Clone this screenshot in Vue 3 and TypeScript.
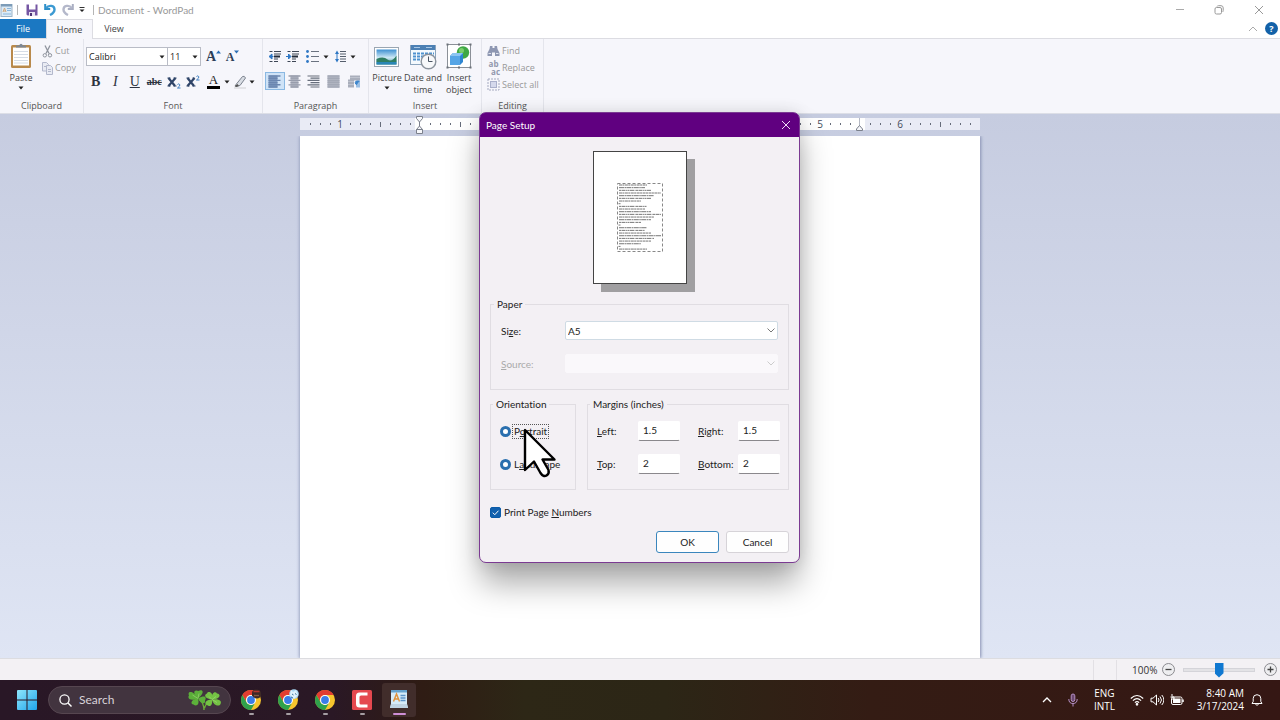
<script setup lang="ts">
import { ref } from 'vue'

const fontName = ref('Calibri')
const fontSize = ref('11')
const paperSize = ref('A5')
const orientation = ref('portrait')
const printNumbers = ref(true)
const zoom = ref(50)
const margins = ref({ left: '1.5', right: '1.5', top: '2', bottom: '2' })

interface Mark { kind: 'num' | 'half' | 'dot' | 'none'; text: string; inside: boolean }

// Ruler: eight divisions to the inch, zero at the left margin (division 12)
const marks: Mark[] = Array.from({ length: 67 }, (_, n) => {
  const i = n + 1
  const inch = Math.abs(i - 12) / 8
  const inside = i >= 12 && i <= 56
  if (i === 12 || i === 56) return { kind: 'none', text: '', inside }
  if (Number.isInteger(inch)) return { kind: 'num', text: String(inch), inside }
  return { kind: i % 4 === 0 ? 'half' : 'dot', text: '', inside }
})

// Widths of the sample paragraph's lines in the page preview
const lineWidths = [28, 26, 32, 42, 35, 32, 22, 2]
const previewLines = Array.from({ length: 25 }, (_, i) => ({
  y: 2 + i * 2.67,
  w: lineWidths[i % 8],
  dash: i % 3 === 0 ? '3 .4 2 .5' : i % 3 === 1 ? '5 .5 1.5 .4' : '2 .5 4 .6 1 .4',
}))
</script>

<template>
  <div class="desktop">
    <header class="titlebar">
      <svg class="app-icon" width="13" height="14" viewBox="0 0 13 14">
        <rect x="1" y="1.5" width="11" height="12" fill="#dcebf7" stroke="#9db4c8" />
        <rect x="1" y="1" width="11" height="2.5" fill="#7d9cb8" />
        <path d="M3 9l1.5-4L6 9M3.5 8h2" stroke="#d3a87c" fill="none" />
        <path d="M7 5.5h4M7 7.5h4M3 11h8" stroke="#8bb6db" />
      </svg>
      <i class="vbar"></i>
      <button class="ico" aria-label="Save">
        <svg width="12" height="12" viewBox="0 0 12 12">
          <path d="M.5 .5h11v11h-10l-1-1z" fill="#7556a3" />
          <rect x="3" y="0" width="6.5" height="5.5" fill="#fff" />
          <rect x="3" y="8" width="6" height="4" fill="#e9e4f2" />
          <rect x="4" y="9" width="2" height="3" fill="#4c3475" />
        </svg>
      </button>
      <button class="ico" aria-label="Undo">
        <svg width="12" height="13" viewBox="0 0 12 13">
          <path d="M1.200 1v5h5" fill="none" stroke="#2d8fc9" stroke-width="2" />
          <path d="M2 5c3-3.500 8.500-2.500 8.500 1.500 0 2.500-1.500 4-4.500 5.500" fill="none" stroke="#3c9ad2" stroke-width="2.400" />
        </svg>
      </button>
      <button class="ico" aria-label="Redo">
        <svg width="12" height="13" viewBox="0 0 12 13">
          <path d="M10.800 1v5h-5" fill="none" stroke="#a9aec2" stroke-width="2" />
          <path d="M10 5C7 1.500 1.500 2.500 1.500 6.500 1.500 9 3 10.500 6 12" fill="none" stroke="#b4b8ca" stroke-width="2.400" />
        </svg>
      </button>
      <button class="ico small" aria-label="Customize Quick Access Toolbar">
        <svg width="6" height="6" viewBox="0 0 6 6"><path d="M.5 .5h5" stroke="#333" /><path d="M.5 2.500h5L3 5z" fill="#222" /></svg>
      </button>
      <i class="vbar last"></i>
      <span class="title">Document - WordPad</span>
      <div class="caption">
        <button aria-label="Minimize"><svg width="10" height="10" viewBox="0 0 10 10"><path d="M1 4.500h8" stroke="#aaa" /></svg></button>
        <button aria-label="Restore"><svg width="10" height="10" viewBox="0 0 10 10" fill="none" stroke="#999"><rect x="1" y="2.500" width="6.500" height="6.500" rx="1.500" /><path d="M3 1.500q.3-.8 1.500-.8h2.500q2.200 0 2.200 2.200v2.600q0 1-.8 1.500" /></svg></button>
        <button aria-label="Close"><svg width="10" height="10" viewBox="0 0 10 10"><path d="M1 1l8 8M9 1l-8 8" stroke="#999" /></svg></button>
      </div>
    </header>

    <nav class="tabs">
      <button class="tab file">File</button>
      <button class="tab home">Home</button>
      <button class="tab">View</button>
      <div class="tab-tools">
        <button class="ico" aria-label="Minimize the Ribbon"><svg width="10" height="6" viewBox="0 0 10 6"><path d="M1 5l4-4 4 4" fill="none" stroke="#aaa" /></svg></button>
        <button class="help" aria-label="Help">?</button>
      </div>
    </nav>

    <section class="ribbon">
      <div class="group g-clip">
        <div class="body clip">
          <button class="big">
            <svg width="24" height="27" viewBox="0 0 24 27">
              <rect x="2" y="2" width="20" height="23" rx="1.500" fill="#b98a4c" />
              <rect x="4" y="4.500" width="16" height="18" fill="#fff" />
              <path d="M5 8.500h14M5 11.500h14M5 14.500h14M5 17.500h14M5 20h14" stroke="#d5dce6" />
              <path d="M7 4.500V2.500h3q2-3.500 4 0h3v2z" fill="#7d8794" />
            </svg>
            <span>Paste</span>
            <svg width="6" height="4" viewBox="0 0 6 4"><path d="M.5 .5h5L3 3.500z" fill="#222" /></svg>
          </button>
          <div class="side">
            <button class="row-btn">
              <svg width="11" height="13" viewBox="0 0 11 13" fill="none" stroke="#8f949e">
                <path d="M3 .5l4 8M8 .5l-4 8" stroke-width="1.300" /><circle cx="2.800" cy="10.300" r="1.700" /><circle cx="8" cy="10.300" r="1.700" />
              </svg>Cut</button>
            <button class="row-btn">
              <svg width="11" height="13" viewBox="0 0 11 13" fill="#e9ebf3" stroke="#b3b8cc">
                <path d="M.5 .5h4l2 2v6.500h-6z" /><path d="M4.500 3.500h4l2 2v7h-6z" /><path d="M6 7.500h3M6 9.500h3M2 4.500h2" />
              </svg>Copy</button>
          </div>
        </div>
        <div class="label">Clipboard</div>
      </div>

      <div class="group g-font">
        <div class="body rows">
          <div class="line">
            <span class="combo name">
              <select v-model="fontName" aria-label="Font family"><option>Calibri</option></select>
              <svg width="6" height="4" viewBox="0 0 6 4"><path d="M.5 .5h5L3 3.500z" fill="#222" /></svg>
            </span>
            <span class="combo size">
              <select v-model="fontSize" aria-label="Font size"><option>11</option></select>
              <svg width="6" height="4" viewBox="0 0 6 4"><path d="M.5 .5h5L3 3.500z" fill="#222" /></svg>
            </span>
            <button class="ico grow" aria-label="Grow font"><b>A</b><svg width="5" height="4" viewBox="0 0 5 4"><path d="M0 3.500h5L2.500 .5z" fill="#2c6fb5" /></svg></button>
            <button class="ico shrink" aria-label="Shrink font"><b>A</b><svg width="5" height="4" viewBox="0 0 5 4"><path d="M0 .5h5L2.500 3.500z" fill="#2c6fb5" /></svg></button>
          </div>
          <div class="line">
            <div class="six">
              <button class="ico serif" aria-label="Bold"><b>B</b></button>
              <button class="ico serif" aria-label="Italic"><i>I</i></button>
              <button class="ico serif" aria-label="Underline"><u>U</u></button>
              <button class="ico strike" aria-label="Strikethrough"><s>abc</s></button>
              <button class="ico" aria-label="Subscript">
                <svg width="14" height="14" viewBox="0 0 14 14"><path d="M1.500 3l6.500 8M8.500 3l-7 8" stroke="#2f4468" stroke-width="2.200" /><path d="M.5 3h3M6.500 3h3M.5 11h3M6.500 11h3" stroke="#2f4468" /><path d="M10.500 9.500q1.200-1.200 2.200 0t-2.200 3.500h3" fill="none" stroke="#3b7cc0" /></svg>
              </button>
              <button class="ico" aria-label="Superscript">
                <svg width="14" height="14" viewBox="0 0 14 14"><path d="M1.500 3l6.500 8M8.500 3l-7 8" stroke="#2f4468" stroke-width="2.200" /><path d="M.5 3h3M6.500 3h2M.5 11h3M6.500 11h3" stroke="#2f4468" /><path d="M10.500 1.500q1.200-1.200 2.200 0t-2.200 3.500h3" fill="none" stroke="#3b7cc0" /></svg>
              </button>
            </div>
            <button class="ico color" aria-label="Text color"><span>A</span><svg width="6" height="4" viewBox="0 0 6 4"><path d="M.5 .5h5L3 3.500z" fill="#222" /></svg></button>
            <button class="ico pen" aria-label="Text highlight color">
              <svg width="14" height="14" viewBox="0 0 14 14"><path d="M3 9.500L9.500 1.500q2-1 3 1.500L7 10.500l-4 1z" fill="#d9dde4" stroke="#7b828e" /><path d="M1 13h12" stroke="#dcdce0" stroke-width="1.500" /><path d="M1.500 11l3-2 1.500 2-3 1z" fill="#555" /></svg>
              <svg width="6" height="4" viewBox="0 0 6 4"><path d="M.5 .5h5L3 3.500z" fill="#222" /></svg>
            </button>
          </div>
        </div>
        <div class="label">Font</div>
      </div>

      <div class="group g-para">
        <div class="body rows">
          <div class="line indent">
            <button class="ico" aria-label="Decrease indent"><svg width="14" height="13" viewBox="0 0 14 13"><path d="M1.500 1.500h3M6 1.500h7M1.500 11.500h3M6 11.500h4M6 9h4M6 4h7" stroke="#3d4655" /><path d="M6 6.500h6" stroke="#222a38" stroke-width="2" /><path d="M5.500 6.500h-3M4 4L1 6.500 4 9z" stroke="#2e77c4" fill="#2e77c4" /></svg></button>
            <button class="ico" aria-label="Increase indent"><svg width="14" height="13" viewBox="0 0 14 13"><path d="M1.500 1.500h3M6 1.500h7M1.500 11.500h3M6 11.500h4M6 9h4M6 4h7" stroke="#3d4655" /><path d="M6 6.500h6" stroke="#222a38" stroke-width="2" /><path d="M0 6.500h3M2.500 4L5 6.500 2.500 9z" stroke="#2e77c4" fill="#2e77c4" /></svg></button>
            <button class="ico wide" aria-label="Start a list"><svg width="13" height="13" viewBox="0 0 13 13"><path d="M5 1.500h8M5 6.500h8M5 11.500h8" stroke="#6a7280" /><circle cx="1.500" cy="1.500" r="1.400" fill="#2e77c4" /><circle cx="1.500" cy="6.500" r="1.400" fill="#2e77c4" /><circle cx="1.500" cy="11.500" r="1.400" fill="#2e77c4" /></svg>
              <svg width="6" height="4" viewBox="0 0 6 4"><path d="M.5 .5h5L3 3.500z" fill="#222" /></svg></button>
            <button class="ico wide" aria-label="Line spacing"><svg width="11" height="13" viewBox="0 0 11 13"><path d="M5 1.500h6M5 4h6M5 6.500h6M5 9h6M5 11.500h6" stroke="#555e6c" /><path d="M2 3v7" stroke="#2e77c4" /><path d="M0 4l2-3.500L4 4zM0 9l2 3.500L4 9z" fill="#2e77c4" /></svg>
              <svg width="6" height="4" viewBox="0 0 6 4"><path d="M.5 .5h5L3 3.500z" fill="#222" /></svg></button>
          </div>
          <div class="five">
            <button class="ico on" aria-label="Align left"><svg width="13" height="13" viewBox="0 0 13 13"><path d="M.5 .5h9v12h-9z" fill="#7f9ac0" /><path d="M.5 1h12M.5 3.200h9M.5 5.400h12M.5 7.600h9M.5 9.800h12M.5 12h9" stroke="#6b86b0" stroke-width="1.400" /></svg></button>
            <button class="ico" aria-label="Center"><svg width="13" height="13" viewBox="0 0 13 13"><path d="M2.500 .5h8v12h-8z" fill="#b4b8c4" /><path d="M.5 1h12M2.500 3.200h8M.5 5.400h12M2.500 7.600h8M.5 9.800h12M2.500 12h8" stroke="#979cab" stroke-width="1.300" /></svg></button>
            <button class="ico" aria-label="Align right"><svg width="13" height="13" viewBox="0 0 13 13"><path d="M.5 1h12M3.500 3.200h9M.5 5.400h12M3.500 7.600h9M.5 9.800h12M3.500 12h9" stroke="#666d7b" stroke-width="1.200" /></svg></button>
            <button class="ico" aria-label="Justify"><svg width="13" height="13" viewBox="0 0 13 13"><path d="M.5 .5h12v12H.5z" fill="#b4b8c4" /><path d="M.5 1h12M.5 3.200h12M.5 5.400h12M.5 7.600h12M.5 9.800h12M.5 12h12" stroke="#a3a8b5" stroke-width="1.500" /></svg></button>
            <button class="ico" aria-label="Paragraph"><svg width="13" height="13" viewBox="0 0 13 13"><path d="M3 .5h10v5H7v7H1v-8h2z" fill="#a9aebb" /><path d="M3 2.500h10M1 6.500h6M1 9.500h6" stroke="#bfc3ce" /><path d="M10 12.500V6M12 12.500V6M12.500 6H10a1.500 1.500 0 0 0 0 3.500" stroke="#3e86cc" fill="#3e86cc" /></svg></button>
          </div>
        </div>
        <div class="label">Paragraph</div>
      </div>

      <div class="group g-insert">
        <div class="body insert">
          <button class="big">
            <svg width="26" height="27" viewBox="0 0 26 27">
              <defs><linearGradient id="sky" x1="0" y1="0" x2="0" y2="1"><stop offset="0" stop-color="#3d8fd1" /><stop offset=".55" stop-color="#cfeaf6" /><stop offset="1" stop-color="#2c7f8e" /></linearGradient></defs>
              <rect x=".5" y="4.500" width="24" height="19" fill="#fff" stroke="#9aa6b2" />
              <rect x="2.500" y="6.500" width="20" height="15" fill="url(#sky)" />
              <path d="M2.500 16q7-3 11 .5t9-4V19H2.500z" fill="#2f7d62" />
              <path d="M2.500 19h20v2.500h-20z" fill="#2a86b5" />
            </svg>
            <span>Picture</span>
            <svg width="6" height="4" viewBox="0 0 6 4"><path d="M.5 .5h5L3 3.500z" fill="#222" /></svg>
          </button>
          <button class="big">
            <svg width="27" height="27" viewBox="0 0 27 27">
              <rect x=".5" y="2.500" width="25" height="19" fill="#f4f9fd" stroke="#8ba4bd" />
              <rect x="1" y="2" width="24" height="5" fill="#4c80b4" />
              <path d="M4 4.500h6M16 4.500h6" stroke="#a9c8e6" />
              <path d="M3 10.500h21M3 13.500h21M3 16.500h21" stroke="#4e92cf" stroke-width="2" stroke-dasharray="3 1" />
              <circle cx="18.500" cy="18.500" r="7.300" fill="#f7f8fa" stroke="#8a929c" stroke-width="1.400" />
              <path d="M18.500 13.500v5h4" fill="none" stroke="#4b5563" />
            </svg>
            <span>Date and<br>time</span>
          </button>
          <button class="big">
            <svg width="26" height="27" viewBox="0 0 26 27">
              <rect x="1.500" y="1.500" width="23" height="23" fill="#fff" stroke="#8b9097" />
              <circle cx="17" cy="9.500" r="6.200" fill="#3fa845" /><circle cx="15.500" cy="7.500" r="2.500" fill="#7ccf6e" />
              <path d="M4 13l3-3h10v9l-3 3H4z" fill="#2f86d2" /><path d="M4 13l3-3h10l-3 3z" fill="#8cc5f2" /><path d="M4 13h10v9H4z" fill="#56a5e6" />
              <path d="M.5 .5h2v2h-2zM23.500 .5h2v2h-2zM.5 23.500h2v2h-2zM23.500 23.500h2v2h-2zM12 .5h2v2h-2zM12 23.500h2v2h-2z" fill="#6b7078" />
            </svg>
            <span>Insert<br>object</span>
          </button>
        </div>
        <div class="label">Insert</div>
      </div>

      <div class="group g-edit">
        <div class="body edit">
          <button class="row-btn">
            <svg width="13" height="12" viewBox="0 0 13 12"><path d="M3 1h2.500v2h2V1H10l.5 3 2 4v3H8V7.500H5V11H.5V8l2-4z" fill="#8e97b2" /><path d="M1.500 8.500h2.500M9 8.500h2.500" stroke="#dfe3ee" /></svg>Find</button>
          <button class="row-btn">
            <span class="swap"><span>ab</span><span>ac</span></span>Replace</button>
          <button class="row-btn">
            <svg width="13" height="13" viewBox="0 0 13 13"><rect x="1" y="1" width="11" height="11" fill="none" stroke="#a5aac0" stroke-dasharray="2 1" /><rect x="3.500" y="3.500" width="6" height="6" fill="#d5d9ec" stroke="#aab0cb" /></svg>Select all</button>
        </div>
        <div class="label">Editing</div>
      </div>
    </section>

    <main class="workspace">
      <div class="ruler">
        <span v-for="(m, i) in marks" :key="i" class="mark" :class="[m.kind, { inside: m.inside }]">
          <template v-if="m.kind === 'num'">{{ m.text }}</template>
          <svg v-if="i === 11" class="stop" width="9" height="20" viewBox="0 0 9 20" fill="#f6f7fb" stroke="#7b808c">
            <path d="M1.500 1.500h6v2L4.500 7l-3-3.500z" /><path d="M4.500 7v4" /><path d="M1.500 14.500l3-3.500 3 3.500zM1.500 14.500h6v4h-6z" />
          </svg>
          <svg v-if="i === 55" class="stop" width="9" height="20" viewBox="0 0 9 20" fill="#f6f7fb" stroke="#7b808c">
            <path d="M4.500 3v9" stroke="#b5b9c4" /><path d="M1.500 15.500V14l3-3.500 3 3.500v1.500z" />
          </svg>
        </span>
      </div>
      <div class="page"></div>
    </main>

    <footer class="status">
      <i class="sbar"></i>
      <i class="sbar second"></i>
      <span class="percent">100%</span>
      <button class="round" aria-label="Zoom out"><svg width="13" height="13" viewBox="0 0 13 13"><circle cx="6.500" cy="6.500" r="6" fill="#eeeef0" stroke="#8b8b90" /><path d="M3.500 6.500h6" stroke="#444" stroke-width="1.300" /></svg></button>
      <input v-model="zoom" class="slider" type="range" min="0" max="100" aria-label="Zoom">
      <button class="round" aria-label="Zoom in"><svg width="13" height="13" viewBox="0 0 13 13"><circle cx="6.500" cy="6.500" r="6" fill="#eeeef0" stroke="#8b8b90" /><path d="M3.500 6.500h6M6.500 3.500v6" stroke="#444" stroke-width="1.300" /></svg></button>
    </footer>

    <div class="taskbar">
      <button class="start" aria-label="Start">
        <svg width="20" height="20" viewBox="0 0 20 20">
          <defs><linearGradient id="win" x1="0" y1="0" x2="1" y2="1"><stop offset="0" stop-color="#8fe6fb" /><stop offset="1" stop-color="#1fa5ee" /></linearGradient></defs>
          <path d="M0 1q0-1 1-1h8.500v9.500H0zM10.500 0H19q1 0 1 1v8.500h-9.500zM0 10.500h9.500V20H1q-1 0-1-1zM10.500 10.500H20V19q0 1-1 1h-8.500z" fill="url(#win)" />
        </svg>
      </button>
      <button class="search">
        <svg width="13" height="13" viewBox="0 0 13 13" fill="none" stroke="#fff"><circle cx="5.500" cy="5.500" r="4.600" stroke-width="1.300" /><path d="M9 9l3.500 3.500" stroke-width="1.400" /></svg>
        <span>Search</span>
        <svg class="clover" width="34" height="22" viewBox="0 0 34 22">
          <path d="M11 10q5 4 5 11M23 11q-5 3-6.500 8" stroke="#6dab38" stroke-width="1.400" fill="none" />
          <g fill="#5cb03a">
            <path d="M10 9.500C4 4 6 0 10.500 2 14-.5 18 3 10 9.500z" /><path d="M10 9.500C2 13-1 9 1 6.500-1 2 5 1 10 9.500z" /><path d="M10 9.500c7-4 9-1 7 2 1 4-4 4-7-2z" /><path d="M10 9.500c2 7-2 8-4.500 6-3 0-3.500-5 4.500-6z" />
          </g>
          <g fill="#74c244">
            <path d="M24 10.500C16 9.500 16 5.500 19 4.500c1-3 7-1.500 5 6z" /><path d="M24 10.500C23 3.500 27.500 2 29 4.500c4 0 4 6-5 6z" /><path d="M24 10.500c8-1 10 2 8.500 4.500-1 3-7 2-8.500-4.500z" /><path d="M24 10.500c1 7-3 7.500-5 5.500-3-.5-2-5.500 5-5.500z" />
          </g>
          <path d="M10 9.500L4.500 6M10 9.500l1-5M24 10.500l-3-3M24 10.500l4-3M24 10.500l5 3" stroke="#a4dc7c" stroke-width=".6" />
        </svg>
      </button>
      <div class="apps">
        <button v-for="n in 3" :key="n" class="app" aria-label="Google Chrome">
          <svg width="22" height="22" viewBox="0 0 22 22">
            <circle cx="11" cy="12" r="10" fill="#f7c52d" />
            <path d="M2.340 7A10 10 0 0 1 19.660 7H11a5 5 0 0 0-4.300 7.500z" fill="#e23d31" />
            <path d="M2.340 7A10 10 0 0 0 11 22l4.330-7.500a5 5 0 0 1-8.660 0z" fill="#2fa24c" />
            <circle cx="11" cy="12" r="5" fill="#fff" /><circle cx="11" cy="12" r="3.900" fill="#3b7de8" />
            <g v-if="n === 1"><path d="M12 5q0-3.500 4-3.500t5 3v3q-1 3-4 3t-5-3z" fill="#3c2a28" /><path d="M13.500 3.500h6" stroke="#b2382e" stroke-width="1.600" /><path d="M14 7.500h5" stroke="#8a5a40" stroke-width="1.300" /></g>
            <g v-if="n === 2"><circle cx="17" cy="6" r="4.800" fill="#a9d7f2" /><path d="M14 2l2 2 3-2 2 5-4 4-4-4z" fill="#dff1fb" /><path d="M15 6l1.500 1M18 5.500l1.500 1M14 9l2 1" stroke="#39749c" /></g>
          </svg>
          <i class="run"></i>
        </button>
        <button class="app" aria-label="Camtasia">
          <svg width="22" height="22" viewBox="0 0 22 22"><rect x="1" y="2" width="20" height="20" rx="1.500" fill="#e5484f" /><path d="M16.500 4.500H8.500q-3.500 0-3.500 3.500v8q0 3.500 3.500 3.500h8V16.500H10q-1.500 0-1.500-1.500V9q0-1.500 1.500-1.500h6.500z" fill="#fff" /></svg>
          <i class="run"></i>
        </button>
        <button class="app active" aria-label="WordPad">
          <svg width="22" height="22" viewBox="0 0 22 22"><path d="M3 2h16v14l1 4H2l1-4z" fill="#d6ebf8" /><path d="M3 2h16v2.500H3z" fill="#66a3ce" /><path d="M5.500 13.500L8.500 6l3 7.500M6.500 11h4" fill="none" stroke="#e0913a" stroke-width="1.400" /><path d="M12.500 7.500h5M12.500 10h5M12.500 12.500h5" stroke="#5b93c7" stroke-width="1.400" /><path d="M3 16h16l1 4H2z" fill="#c0d3e2" /></svg>
          <i class="run"></i>
        </button>
      </div>
      <div class="tray">
        <button class="ico t-chev" aria-label="Show hidden icons"><svg width="10" height="6" viewBox="0 0 10 6"><path d="M1 5l4-4 4 4" fill="none" stroke="#fff" stroke-width="1.300" /></svg></button>
        <button class="ico t-mic" aria-label="Microphone"><svg width="10" height="14" viewBox="0 0 10 14" fill="none" stroke="#b48fc4"><rect x="3.200" y="1" width="3.600" height="7.500" rx="1.800" fill="#6d4a70" /><path d="M.8 6q0 4.500 4.200 4.500T9.200 6M5 10.500V13.500" /></svg></button>
        <button class="lang">ENG<br>INTL</button>
        <button class="net" aria-label="Network, sound and battery">
          <svg width="14" height="12" viewBox="0 0 14 12" fill="none" stroke="#fff" stroke-width="1.100"><path d="M.8 4.500q6.200-6 12.400 0M2.900 6.700q4.100-4 8.200 0M4.900 8.700q2.100-2 4.200 0" /><circle cx="7" cy="10.300" r=".8" fill="#fff" /></svg>
          <svg width="14" height="12" viewBox="0 0 14 12" fill="none" stroke="#fff"><path d="M1 4.200h2L6.500 1v10L3 7.800H1z" /><path d="M8.200 4q1.600 2 0 4M10 2.500q3 3.500 0 7M11.800 1q4.200 5 0 10" /></svg>
          <svg width="14" height="12" viewBox="0 0 14 12" fill="none" stroke="#fff"><rect x="1.500" y="3" width="10.500" height="7.500" rx="1.500" /><rect x="3.500" y="5" width="6.500" height="3.500" fill="#fff" /><path d="M13 5.500v2.500" stroke-width="1.500" /><path d="M2 0v2.500M.5 3h3.500v2H2" /></svg>
        </button>
        <button class="clock">8:40 AM<br>3/17/2024</button>
        <button class="ico t-bell" aria-label="Notifications"><svg width="12" height="14" viewBox="0 0 12 14" fill="none" stroke="#fff"><path d="M1 10.500l1.200-2V5.500a3.800 3.800 0 0 1 7.600 0v3l1.200 2z" /><path d="M4.500 11q1.500 3 3 0" /></svg></button>
      </div>
    </div>

    <section class="dialog" role="dialog" aria-label="Page Setup">
      <header class="dlg-title">
        <span>Page Setup</span>
        <button aria-label="Close dialog"><svg width="10" height="10" viewBox="0 0 10 10"><path d="M1 1l8 8M9 1l-8 8" stroke="#f0dcf8" /></svg></button>
      </header>
      <form class="dlg-body" @submit.prevent>
        <div class="preview">
          <svg width="46" height="70" viewBox="0 0 46 70">
            <rect x=".5" y=".5" width="45" height="68" fill="none" stroke="#888" stroke-dasharray="3 2" />
            <path v-for="(l, i) in previewLines" :key="i" :d="`M${i % 8 === 7 ? 1.500 : 2} ${l.y}h${l.w}`" stroke="#777" stroke-width="1" :stroke-dasharray="l.dash" />
          </svg>
        </div>
        <fieldset class="paper">
          <legend>Paper</legend>
          <label for="size">Si<u>z</u>e:</label>
          <span class="drop">
            <select id="size" v-model="paperSize"><option>A5</option></select>
            <svg width="8" height="5" viewBox="0 0 8 5"><path d="M.5 .5L4 4 7.500 .5" fill="none" stroke="#777" /></svg>
          </span>
          <label for="source" class="dim"><u>S</u>ource:</label>
          <span class="drop off">
            <select id="source" disabled></select>
            <svg width="8" height="5" viewBox="0 0 8 5"><path d="M.5 .5L4 4 7.500 .5" fill="none" stroke="#ccc" /></svg>
          </span>
        </fieldset>
        <div class="pair">
          <fieldset class="orient">
            <legend>Orientation</legend>
            <label class="opt focus"><input v-model="orientation" type="radio" name="orient" value="portrait"><span>P<u>o</u>rtrait</span></label>
            <label class="opt"><input v-model="orientation" type="radio" name="orient" value="landscape"><span>L<u>a</u>ndscape</span></label>
          </fieldset>
          <fieldset class="margins">
            <legend>Margins (inches)</legend>
            <label for="m-left"><u>L</u>eft:</label><input id="m-left" v-model="margins.left" type="text">
            <label for="m-right"><u>R</u>ight:</label><input id="m-right" v-model="margins.right" type="text">
            <label for="m-top"><u>T</u>op:</label><input id="m-top" v-model="margins.top" type="text">
            <label for="m-bottom"><u>B</u>ottom:</label><input id="m-bottom" v-model="margins.bottom" type="text">
          </fieldset>
        </div>
        <label class="check">
          <input v-model="printNumbers" type="checkbox">
          <svg width="11" height="11" viewBox="0 0 11 11"><path d="M2.800 5.700l2 2 3.700-4" fill="none" stroke="#fff" /></svg>
          <span>Print Page <u>N</u>umbers</span>
        </label>
        <div class="actions">
          <button class="ok" type="submit">OK</button>
          <button type="button">Cancel</button>
        </div>
      </form>
      <svg class="pointer" width="36" height="54" viewBox="0 0 36 54">
        <path d="M3 4v40l9-8.500 6.500 11.500q3 4.500 6 2.500t2-5.500L20.500 33.500H32.500z" fill="#fff" stroke="#000" stroke-width="2.400" stroke-linejoin="round" />
      </svg>
    </section>
  </div>
</template>

<style>
body { margin: 0; overflow: hidden; }
</style>

<style scoped>
.desktop {
  position: relative;
  display: flex;
  flex-direction: column;
  height: 100vh;
  overflow: hidden;
  font-family: Lato, "Open Sans", sans-serif;
  font-size: 10px;
  font-variant-ligatures: none;
  line-height: 14px;
  color: #222;
  background: #fff;
}
.desktop * { box-sizing: border-box; }
button, select, input { font: inherit; color: inherit; }
button { display: inline-flex; align-items: center; justify-content: center; padding: 0; border: 0; background: none; }
svg { display: block; flex: none; }

.titlebar { display: flex; align-items: center; height: 19px; flex: none; }
.vbar { width: 1px; height: 10px; margin: 0 5px 0 4px; background: #b5b5b5; }
.vbar.last { margin: 0 4px 0 6px; }
.titlebar .ico { width: 18px; }
.titlebar .ico.small { width: 10px; }
.title { color: #999; }
.caption { display: flex; margin-left: auto; }
.caption button { width: 39px; height: 19px; }
.caption button:last-child { width: 42px; }

.tabs { display: flex; height: 20px; flex: none; border-bottom: 1px solid #dcdce2; font-family: "Open Sans", sans-serif; font-size: 9px; }
.tab { width: 42px; height: 19px; color: #444; }
.tab.file { width: 46px; color: #fff; background: #1b78c2; }
.tab.home { width: 47px; height: 20px; border: solid #dcdce2; border-width: 1px 1px 0; background: #f6f6fb; }
.tab-tools { display: flex; align-items: center; gap: 7px; margin-left: auto; padding-right: 2px; }
.help { width: 13px; height: 13px; border-radius: 50%; color: #fff; background: #1261a8; font-weight: 700; }

.ribbon { display: flex; height: 75px; flex: none; background: #f6f6fb; border-bottom: 1px solid #dcdee6; font-family: "Open Sans", sans-serif; font-size: 9px; }
.group { display: flex; flex-direction: column; border-right: 1px solid #e4e5ec; }
.g-clip { width: 84px; }
.g-font { width: 179px; }
.g-para { width: 106px; }
.g-insert { width: 113px; }
.g-edit { width: 62px; }
.body { flex: 1; }
.label { text-align: center; color: #555; }
.big { flex-direction: column; justify-content: flex-start; width: 36px; color: #444; line-height: 12px; white-space: nowrap; }
.big span { margin: 2px 0; }
.clip { display: flex; padding: 4px 0 0 3px; gap: 3px; }
.side { display: flex; flex-direction: column; gap: 1px; padding-right: 4px; }
.row-btn { justify-content: flex-start; gap: 2px; height: 17px; color: #999; white-space: nowrap; }
.side .row-btn { height: 16px; }
.rows { display: flex; flex-direction: column; gap: 6px; padding: 8px 2px 0; }
.line { display: flex; align-items: center; height: 19px; }
.combo { position: relative; height: 19px; }
.combo.name { width: 82px; }
.combo.size { width: 33px; }
.combo + .combo select { border-left: 0; }
.combo select { width: 100%; height: 19px; padding: 0 2px; appearance: none; border: 1px solid #b9bcc6; border-radius: 0; background: #fff; }
.combo svg { position: absolute; right: 3px; top: 8px; }
.grow, .shrink { align-items: center; width: 19px; margin-left: 3px; font-family: "Liberation Serif", serif; color: #2d3e58; }
.grow b { font-size: 14px; }
.shrink { margin-left: 0; }
.shrink b { font-size: 12px; }
.grow svg, .shrink svg { align-self: flex-start; }
.six { display: grid; grid-template-columns: repeat(6, 1fr); width: 117px; }
.serif { font-family: "Liberation Serif", serif; font-size: 14px; color: #2d3340; }
.strike { font-family: "Liberation Serif", serif; font-size: 10px; font-weight: 700; color: #2d3340; }
.color { gap: 4px; margin-left: 4px; }
.color span { width: 13px; border-bottom: 3px solid #000; font-family: "Liberation Serif", serif; font-size: 13px; line-height: 12px; }
.pen { gap: 2px; margin-left: 3px; }
.g-para .rows { padding-left: 2px; }
.indent { gap: 4px; padding-left: 3px; }
.wide { gap: 4px; margin-left: 2px; }
.five { display: grid; grid-template-columns: repeat(5, 1fr); width: 98px; }
.five .ico { height: 18px; }
.five .on { background: #cfe3f7; border: 1px solid #8ab8e2; }
.insert { display: flex; padding: 4px 0 0; }
.edit { display: flex; flex-direction: column; padding: 3px 0 0 5px; }
.swap { display: flex; flex-direction: column; width: 13px; font-size: 8px; line-height: 8px; font-weight: 700; color: #9298ad; }
.swap span:last-child { text-align: right; }

.workspace { display: flex; flex: 1; flex-direction: column; align-items: center; min-height: 0; background: linear-gradient(#c6cce0, #dfe5f4); }
.ruler { display: flex; width: 53.125%; height: 12px; margin: 4px 0 6px; padding: 0 5px; flex: none; background: #e9ebf5; }
.mark { position: relative; display: flex; flex: 1; align-items: center; justify-content: center; width: 0; font-size: 10px; line-height: 12px; font-family: "Open Sans", sans-serif; color: #444b5a; }
.inside { background: #fff; }
.dot::before, .half::before { content: ""; width: 1px; height: 2px; background: #666c7a; }
.half::before { height: 5px; }
.stop { position: absolute; left: 0; top: -3px; z-index: 1; }
.page { flex: 1; width: 53.125%; background: #fff; box-shadow: 1px 0 3px #8a93b4, -1px 0 3px #a9b1cc; clip-path: inset(0 -5px 0 -5px); }

.status { display: flex; align-items: center; justify-content: flex-end; height: 22px; flex: none; padding-right: 3px; border-top: 1px solid #dcdce0; background: #f3f1f4; font-family: "Open Sans", sans-serif; }
.sbar { width: 1px; height: 20px; background: #e2e0e4; }
.second { margin: 0 15px 0 22px; }
.percent { width: 26px; margin-right: 4px; color: #333; }
.slider { width: 72px; height: 16px; margin: 0 9px 0 8px; appearance: none; background: none; }
.slider::-webkit-slider-runnable-track { height: 4px; border: 1px solid #d4d4d9; background: #e3e3e6; }
.slider::-webkit-slider-thumb { appearance: none; width: 9px; height: 15px; margin-top: -6px; background: #0f78d0; clip-path: polygon(0 0, 100% 0, 100% 72%, 50% 100%, 0 72%); }

.taskbar { display: flex; align-items: center; height: 40px; flex: none; color: #fff; background: linear-gradient(90deg, #291726 0, #2a1825 26%, #2f1c14 33%, #2d2716 41%, #2c2616 52%, #341c14 68%, #351714 100%); }
.start { width: 20px; margin: 0 11px 0 17px; }
.search { width: 183px; height: 28px; justify-content: flex-start; padding: 0 8px 0 10px; border: 1px solid #564650; border-radius: 14px; background: #42343f; font-size: 12px; color: #d8d2d8; }
.search span { margin-left: 7px; }
.clover { margin-left: auto; }
.apps { display: flex; gap: 3px; margin-left: 3px; }
.app { flex-direction: column; justify-content: flex-start; gap: 3px; width: 34px; height: 34px; padding-top: 5px; border-radius: 3px; }
.run { width: 5px; height: 2px; border-radius: 1px; background: #a59ea3; }
.app.active { background: #412d2b; }
.app.active .run { width: 13px; background: #cf8fd6; }
.tray { display: flex; align-items: center; margin-left: auto; padding-right: 17px; line-height: 13px; font-family: "Open Sans", sans-serif; }
.t-mic { margin: 0 16px; }
.lang { margin-right: 15px; }
.net { gap: 6px; margin-right: 14px; }
.clock { width: 46px; text-align: right; white-space: nowrap; justify-content: flex-end; margin-right: 7px; }

.dialog { position: absolute; top: 112px; left: 50%; width: 321px; margin-left: -161px; border: 1px solid #7b3a92; border-radius: 7px; background: #f3f0f4; box-shadow: 0 22px 32px -2px rgba(0, 0, 0, .34), 0 0 16px rgba(0, 0, 0, .12); }
.dlg-title { display: flex; align-items: center; justify-content: space-between; height: 24px; padding: 0 8px 0 6px; border-radius: 5px 5px 0 0; background: #600080; color: #fff; }
.dlg-body { display: flex; flex-direction: column; padding: 14px 10px 9px; }
.preview { display: flex; align-items: center; justify-content: center; align-self: center; width: 94px; height: 133px; margin-bottom: 13px; border: 1px solid #444; background: #fff; box-shadow: 8px 8px #a09fa1; }
fieldset { min-width: 0; margin: 0; border: 1px solid #e0dde2; }
legend { margin-left: -7px; padding: 0 3px; }
.paper { display: grid; grid-template-columns: 64px 1fr; row-gap: 14px; align-items: center; padding: 10px 10px 16px; }
.dim { color: #aaa; }
.drop { position: relative; }
.drop select { display: block; width: 100%; height: 19px; padding: 0 2px; appearance: none; border: 1px solid #cfdbe4; border-radius: 2px; background: #fff; color: #222; opacity: 1; }
.drop svg { position: absolute; right: 3px; top: 7px; }
.drop.off select { border-color: #faf8fb; background: #faf8fb; }
.pair { display: grid; grid-template-columns: 86px 1fr; gap: 11px; margin-top: 7px; }
.orient { display: flex; flex-direction: column; gap: 13px; padding: 10px 9px 15px; }
.opt { display: flex; align-items: center; gap: 2px; height: 20px; white-space: nowrap; }
.opt span { padding: 0 1px; line-height: 13px; }
.opt.focus span { outline: 1px dotted #555; }
.opt input { flex: none; width: 11px; height: 11px; margin: 0; appearance: none; border: 3px solid #2a6fae; border-radius: 50%; background: #fff; }
.margins { display: grid; grid-template-columns: 41px 42px 1fr 42px; row-gap: 13px; align-items: center; padding: 10px 8px 15px 9px; }
.margins label:nth-of-type(even) { padding-left: 18px; }
.margins input { width: 42px; height: 20px; padding: 0 4px 2px; border: 1px solid #fff; border-bottom-color: #8a888c; border-radius: 2px; background: #fff; }
.check { position: relative; display: flex; align-items: center; gap: 3px; height: 14px; margin-top: 15px; }
.check input { width: 11px; height: 11px; margin: 0; appearance: none; border: 1px solid #0a5ba8; border-radius: 2px; background: #1160ad; }
.check svg { position: absolute; left: 0; top: 2px; }
.actions { display: flex; justify-content: flex-end; gap: 7px; margin-top: 12px; }
.actions button { width: 63px; height: 22px; border: 1px solid #d6d3d8; border-radius: 3px; background: #fefefe; }
.actions .ok { border-color: #3a86bd; }
.pointer { position: absolute; left: 42px; top: 313px; pointer-events: none; }
</style>
